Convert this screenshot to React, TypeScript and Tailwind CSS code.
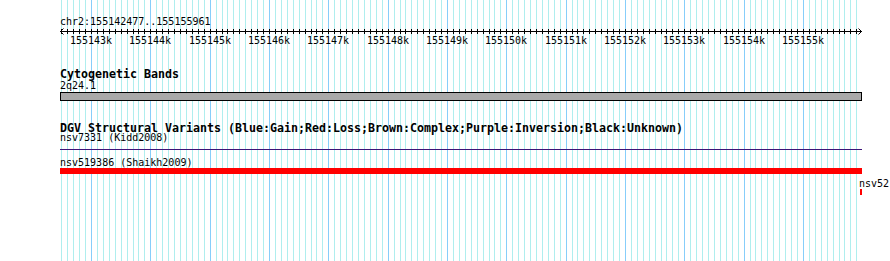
import React from "react";

const START = 155142477;
const END = 155155961;
const SPAN = END - START + 1;
const px = (p: number) => Math.round(60 + ((p - START) * 800) / SPAN);

const positions: number[] = [];
for (let p = 155142500; p <= 155155900; p += 100) positions.push(p);
const majors = positions.filter((p) => p % 1000 === 0);

export default function App() {
  return (
    <div className="relative w-[890px] h-[261px] overflow-hidden bg-white text-black font-['DejaVu_Sans_Mono',monospace]">
      <svg className="absolute inset-0" width={890} height={261}>
        {positions.map((p) => (
          <line
            key={p}
            x1={px(p) + 0.5}
            x2={px(p) + 0.5}
            y1={0}
            y2={261}
            stroke={p % 1000 === 0 ? "#87cefa" : "#afeeee"}
            strokeWidth={1}
            shapeRendering="crispEdges"
          />
        ))}
      </svg>
      <div className="relative">
        <div className="mt-[17px] pl-[60px] h-[10px] text-[10px] leading-[10px] whitespace-nowrap">
          chr2:155142477..155155961
        </div>
        <svg className="block" width={890} height={21}>
          <line x1={60} x2={862} y1={4.5} y2={4.5} stroke="#000" shapeRendering="crispEdges" />
          <polyline points="63.5,1.5 60.5,4.5 63.5,7.5" fill="none" stroke="#000" />
          <polyline points="858.5,1.5 861.5,4.5 858.5,7.5" fill="none" stroke="#000" />
          {positions.map((p) => (
            <line
              key={p}
              x1={px(p) + 0.5}
              x2={px(p) + 0.5}
              y1={2}
              y2={7}
              stroke="#000"
              shapeRendering="crispEdges"
            />
          ))}
          {majors.map((p) => (
            <text
              key={p}
              x={px(p)}
              y={17}
              textAnchor="middle"
              fontSize={10}
              fontFamily="'DejaVu Sans Mono', monospace"
              fill="#000"
            >
              {`${p / 1000}k`}
            </text>
          ))}
        </svg>
        <div className="mt-[21px] pl-[60px] h-[10px] text-[11.63px] font-bold leading-[10px] whitespace-nowrap">
          Cytogenetic Bands
        </div>
        <div className="mt-[2px] pl-[60px] h-[10px] text-[10px] leading-[10px] whitespace-nowrap">2q24.1</div>
        <div className="mt-[1px] ml-[60px] w-[802px] h-[9px] border border-black bg-[#a9a9a9]" />
        <div className="mt-[22px] pl-[60px] h-[10px] text-[11.63px] font-bold leading-[10px] whitespace-nowrap">
          DGV Structural Variants (Blue:Gain;Red:Loss;Brown:Complex;Purple:Inversion;Black:Unknown)
        </div>
        <div className="pl-[60px] h-[10px] text-[10px] leading-[10px] whitespace-nowrap">nsv7331 (Kidd2008)</div>
        <div className="mt-[6px] ml-[60px] w-[802px] h-[1px] bg-[#3c1478]" />
        <div className="mt-[8px] pl-[60px] h-[10px] text-[10px] leading-[10px] whitespace-nowrap">
          nsv519386 (Shaikh2009)
        </div>
        <div className="ml-[60px] w-[802px] h-[6px] bg-[#ff0000]" />
        <div className="mt-[5px] pl-[859px] h-[10px] text-[10px] leading-[10px] whitespace-nowrap">nsv52</div>
        <div className="ml-[860px] w-[2px] h-[6px] bg-[#ff0000]" />
      </div>
    </div>
  );
}
